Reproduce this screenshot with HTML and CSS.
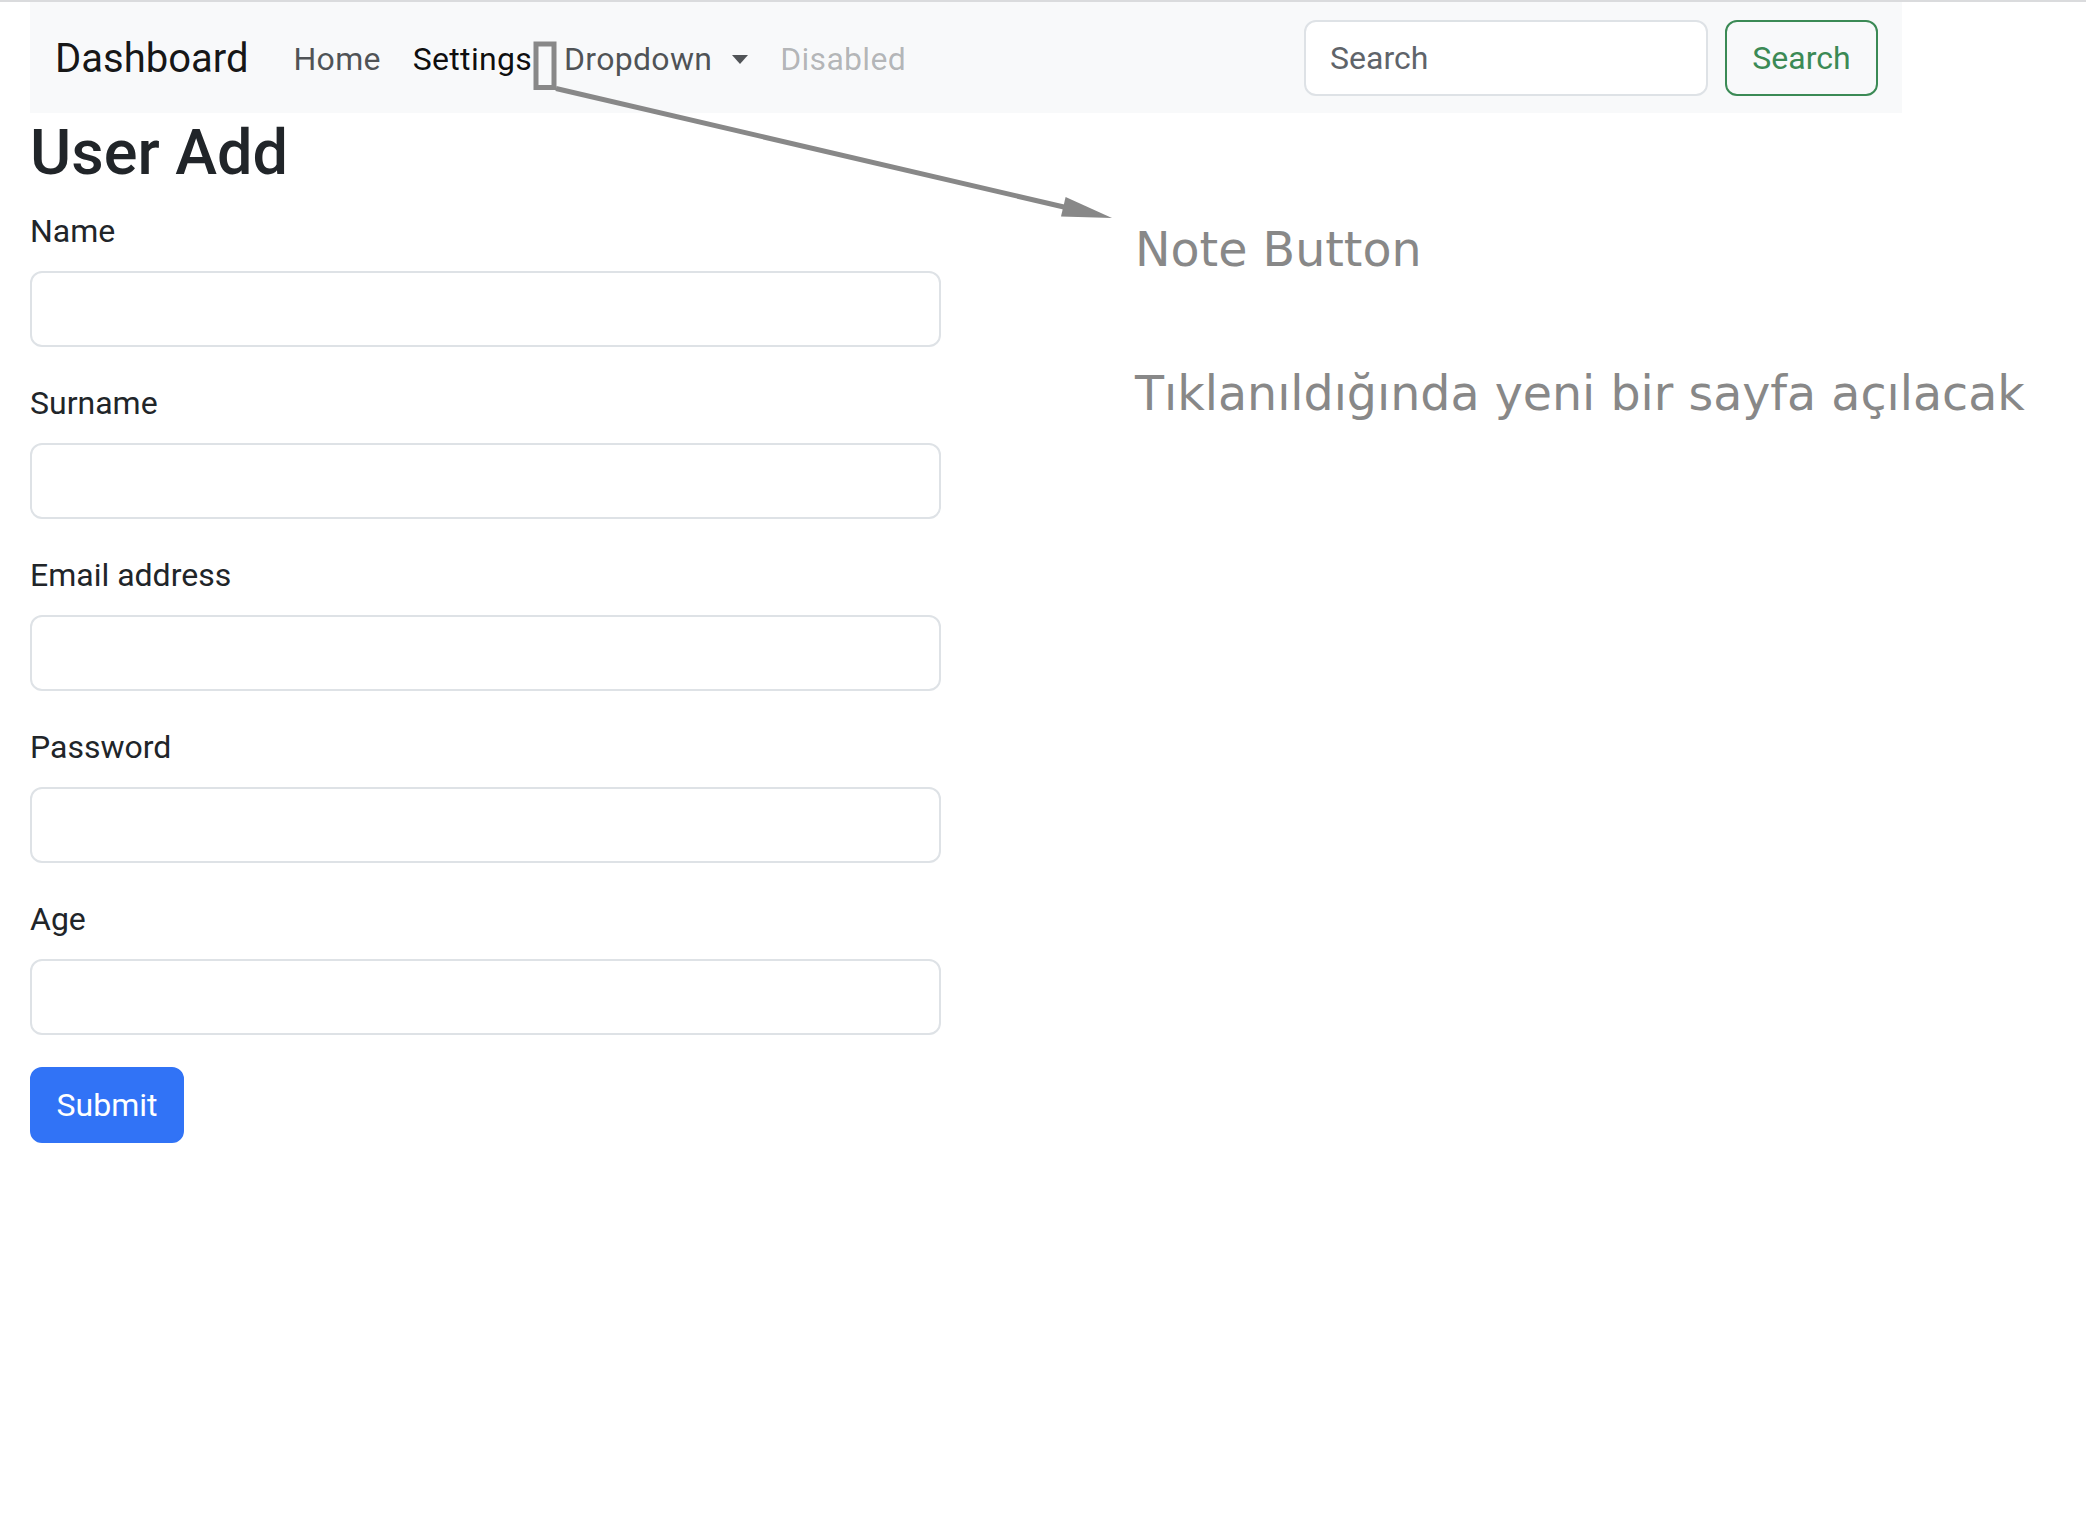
FILE: index.html
```html
<!DOCTYPE html>
<html lang="tr">
<head>
<meta charset="utf-8">
<title>User Add</title>
<link rel="stylesheet" href="styles.css">
</head>
<body>
<div class="page">
  <nav class="navbar">
    <a class="brand" href="#">Dashboard</a>
    <ul class="nav">
      <li><a class="nav-link" href="#">Home</a></li>
      <li><a class="nav-link active" href="#">Settings</a></li>
      <li><a class="nav-link dropdown" href="#">Dropdown</a></li>
      <li><a class="nav-link disabled">Disabled</a></li>
    </ul>
    <form class="search">
      <input class="search-input" type="search" placeholder="Search">
      <button class="search-btn" type="button">Search</button>
    </form>
  </nav>
  <main class="content">
    <h1 class="title">User Add</h1>
    <form class="user-form">
      <div class="field"><label class="label">Name</label><input class="control" type="text"></div>
      <div class="field"><label class="label">Surname</label><input class="control" type="text"></div>
      <div class="field"><label class="label">Email address</label><input class="control" type="email"></div>
      <div class="field"><label class="label">Password</label><input class="control" type="password"></div>
      <div class="field"><label class="label">Age</label><input class="control" type="text"></div>
      <button class="submit" type="button">Submit</button>
    </form>
  </main>
</div>
<div class="annotations">
  <svg class="annot-svg" width="2086" height="1514" viewBox="0 0 2086 1514">
    <rect x="536" y="44" width="18" height="43.5" fill="none" stroke="#888888" stroke-width="5"/>
    <line x1="556" y1="88.5" x2="1066" y2="207.5" stroke="#888888" stroke-width="5"/>
    <polygon points="1112,218 1065.6,197 1061,216.4" fill="#888888"/>
  </svg>
  <span class="note note-title">Note Button</span>
  <span class="note note-desc">Tıklanıldığında yeni bir sayfa açılacak</span>
</div>
</body>
</html>
```

FILE: styles.css
```css
* { box-sizing: border-box; }

html, body { margin: 0; padding: 0; background: #ffffff; }

body {
  border-top: 2px solid #dadbdd;
  font-family: Roboto, "Liberation Sans", Arial, sans-serif;
  color: #212529;
  position: relative;
  min-height: 1514px;
}

.page {
  padding-left: 30px;
}

.navbar {
  display: flex;
  align-items: center;
  width: 1872px;
  height: 111px;
  padding: 0 24px 0 25px;
  background: #f8f9fa;
}

.brand {
  font-size: 40px;
  line-height: 60px;
  color: rgba(0, 0, 0, 0.92);
  text-decoration: none;
  margin: 2px 29px 0 0;
}

.nav {
  display: flex;
  flex: 1;
  list-style: none;
  margin: 3px 0 0;
  padding: 0;
}

.nav-link {
  display: flex;
  align-items: center;
  padding: 0 16px;
  font-size: 32px;
  line-height: 48px;
  letter-spacing: 0.3px;
  color: rgba(33, 37, 41, 0.78);
  text-decoration: none;
}

.nav-link.active { color: rgba(0, 0, 0, 0.95); }

.nav-link.dropdown::after {
  content: "";
  display: inline-block;
  margin-left: 20px;
  border-top: 9px solid currentColor;
  border-left: 8px solid transparent;
  border-right: 8px solid transparent;
}

.nav-link.disabled { color: rgba(33, 37, 41, 0.32); }

.search {
  display: flex;
  gap: 17px;
  margin: 0;
}

.search-input {
  width: 404px;
  height: 76px;
  padding: 0 24px;
  border: 2px solid #dee2e6;
  border-radius: 12px;
  background: #ffffff;
  font-family: Roboto, "Liberation Sans", Arial, sans-serif;
  font-size: 32px;
  color: #212529;
}

.search-input::placeholder { color: #5f646a; }

.search-btn {
  width: 153px;
  height: 76px;
  padding: 0 24px;
  border: 2px solid #3b8a55;
  border-radius: 12px;
  background: transparent;
  color: #3b8a55;
  font-family: Roboto, "Liberation Sans", Arial, sans-serif;
  font-size: 32px;
}

.content {
  width: 911px;
  padding-top: 1px;
}

.title {
  margin: 0 0 15px;
  font-size: 63px;
  line-height: 78px;
  font-weight: 500;
  color: #212529;
}

.user-form { margin: 0; }

.field { margin-bottom: 32px; }

.label {
  display: block;
  margin-bottom: 16px;
  font-size: 32px;
  line-height: 48px;
  color: #212529;
}

.control {
  display: block;
  width: 100%;
  height: 76px;
  padding: 0 24px;
  border: 2px solid #dee2e6;
  border-radius: 12px;
  background: #ffffff;
  font-size: 32px;
}

.submit {
  width: 154px;
  height: 76px;
  padding: 0 24px;
  border: 2px solid #3173f6;
  border-radius: 12px;
  background: #3173f6;
  color: #ffffff;
  font-family: Roboto, "Liberation Sans", Arial, sans-serif;
  font-size: 32px;
}

.annotations {
  position: absolute;
  top: -2px;
  left: 0;
  width: 2086px;
  height: 1514px;
  pointer-events: none;
}

.annot-svg {
  position: absolute;
  top: 0;
  left: 0;
}

.note {
  position: absolute;
  left: 1135px;
  font-family: "DejaVu Sans", Verdana, sans-serif;
  font-size: 47.5px;
  line-height: 1;
  color: #888888;
  white-space: nowrap;
}

.note-title { top: 226px; }
.note-desc { top: 370px; }
```
